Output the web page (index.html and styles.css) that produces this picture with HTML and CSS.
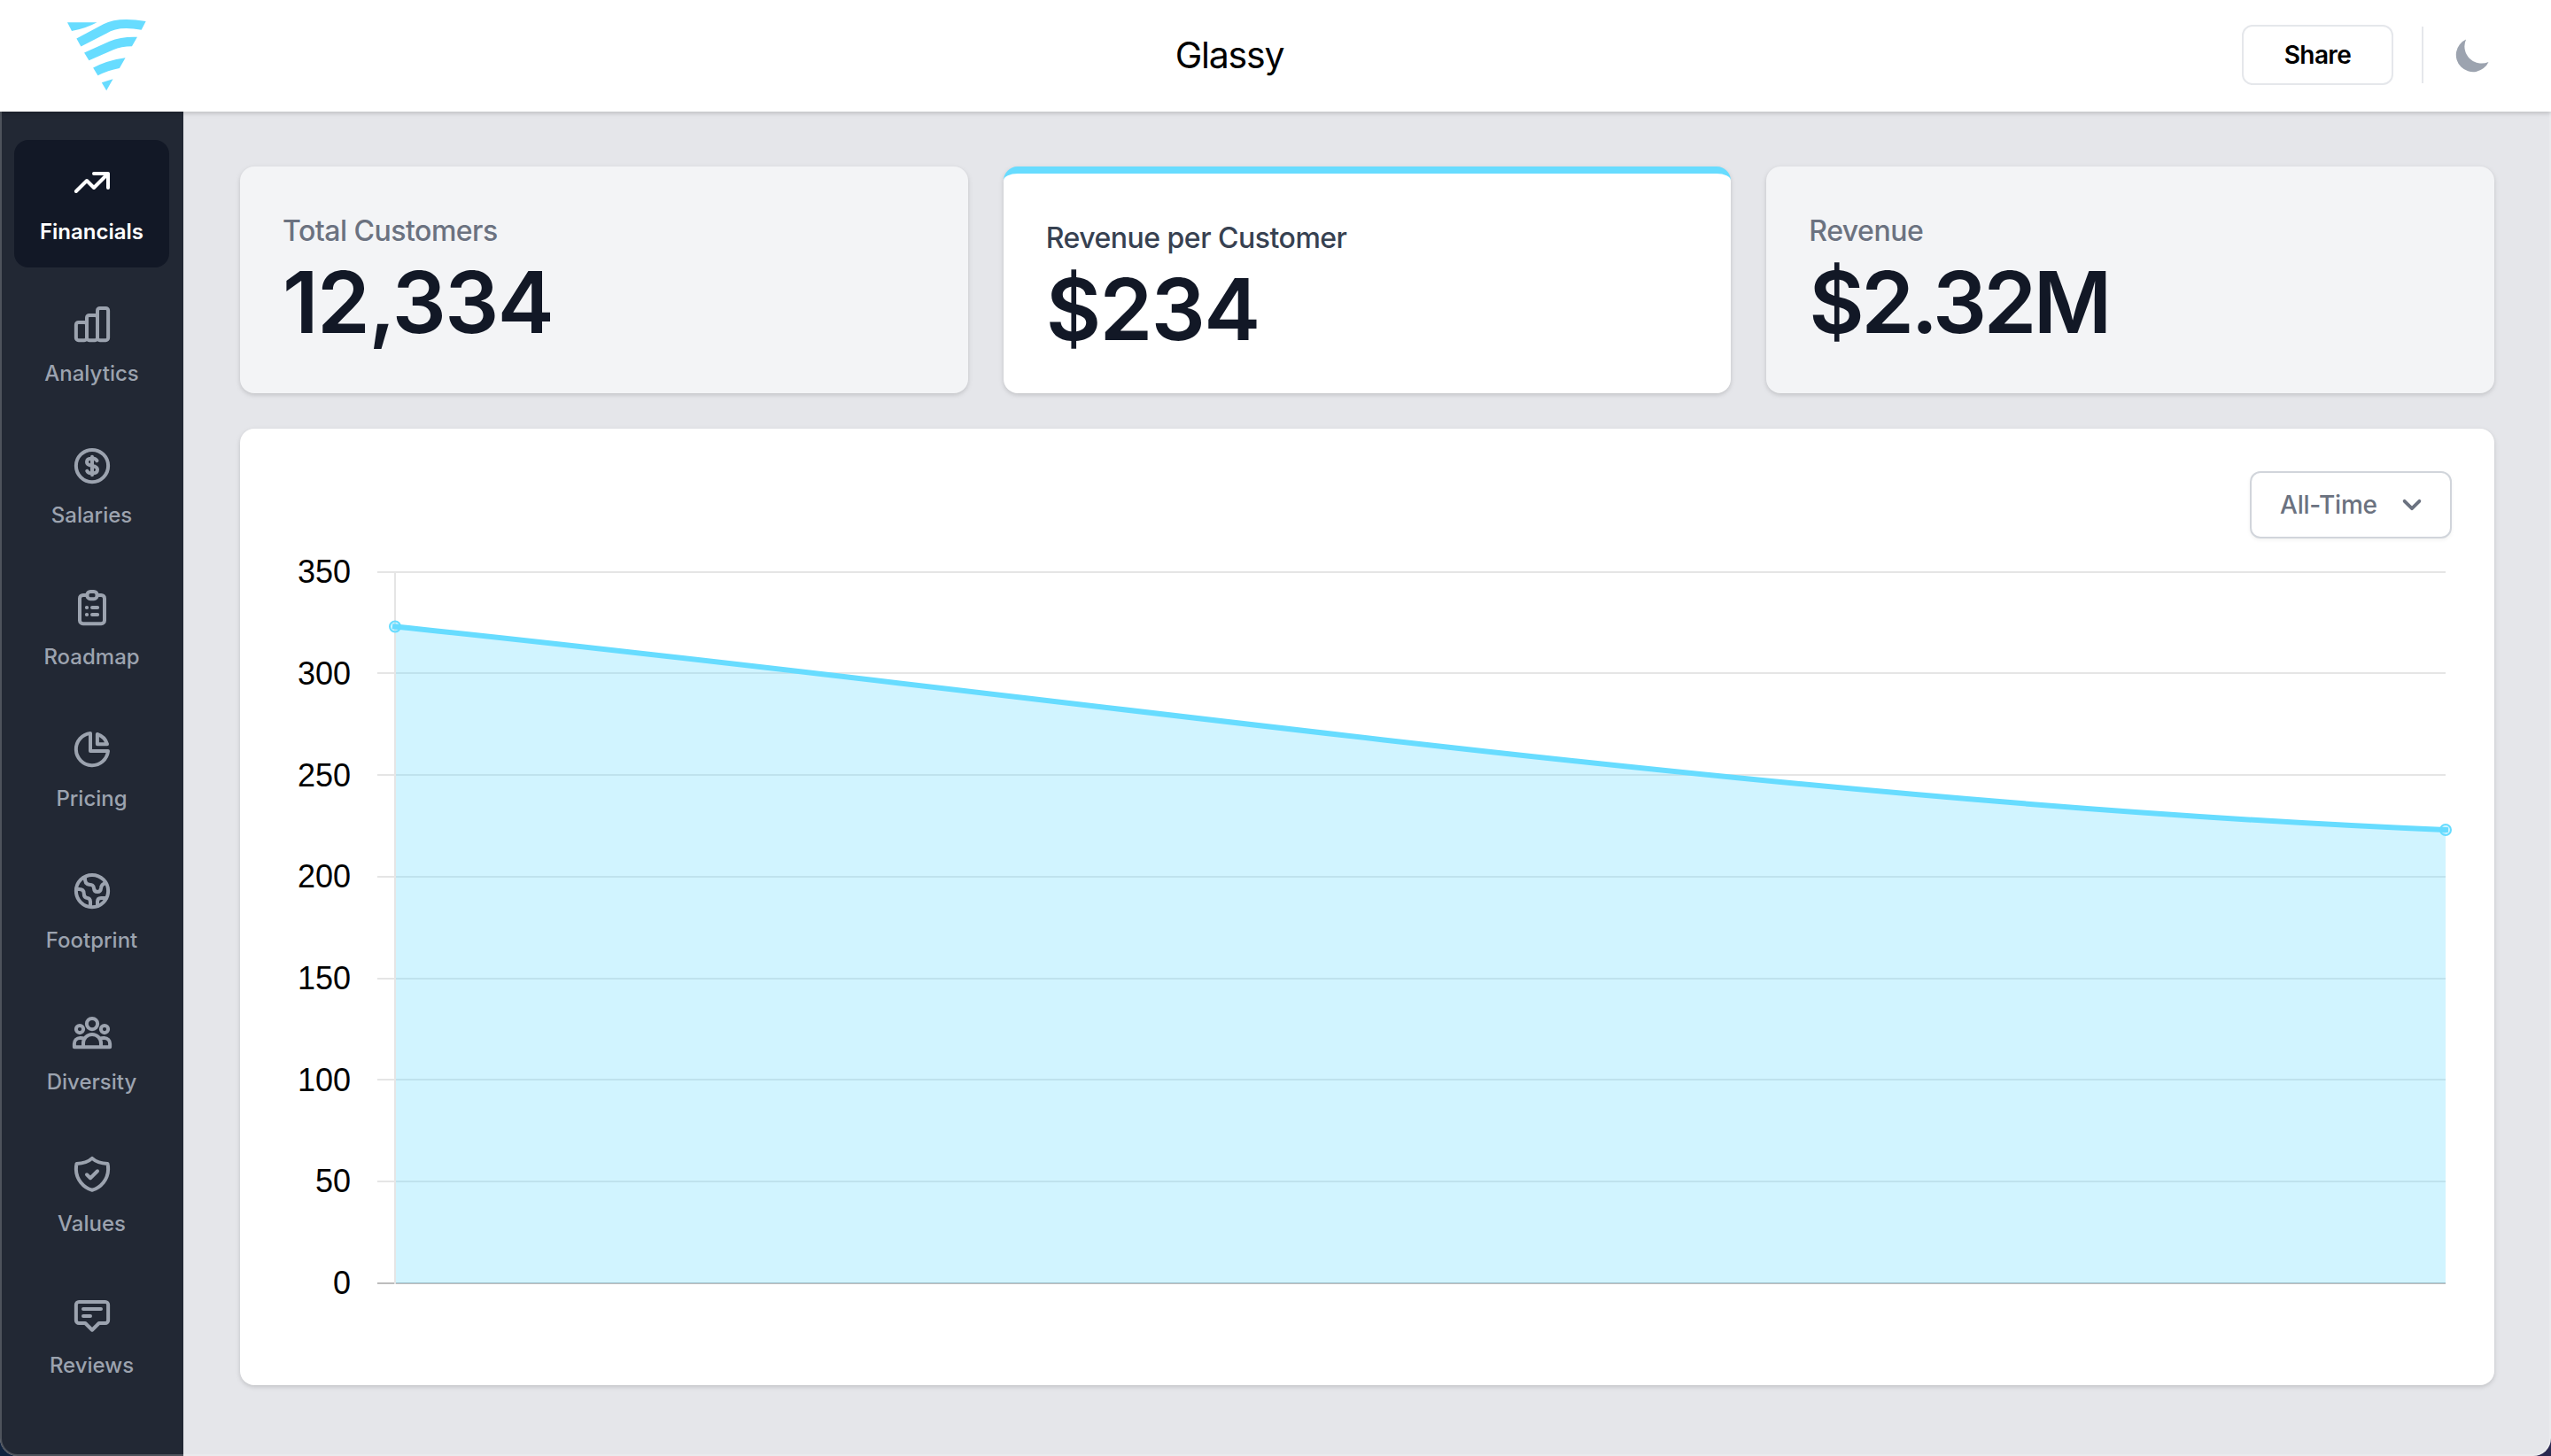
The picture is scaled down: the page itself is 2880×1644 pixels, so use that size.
FILE: index.html
```html
<!DOCTYPE html>
<html lang="en">
<head>
  <meta charset="utf-8">
  <title>Glassy</title>
  <link rel="stylesheet" href="styles.css">
</head>
<body>
  <div class="window">
    <header class="header">
      <a class="logo" href="#">
        <svg viewBox="228 60 266 248">
          <path d="M228 76H328Q290 97 243 105Z"/>
          <path d="M259 130L350 82Q398 56 493 72L478 101Q400 86 360 113L274 157Z"/>
          <path d="M285 178L370 140Q410 123 464 125L446 156Q410 156 383 168L301 204Z"/>
          <path d="M315 229Q360 204 424 195L404 230Q365 237 331 255Z"/>
          <path d="M344 279Q362 273 382 267L360 306Z"/>
        </svg>
      </a>
      <h1 class="title">Glassy</h1>
      <div class="actions">
        <button class="btn-share">Share</button>
        <span class="divider"></span>
        <svg class="moon" viewBox="0 0 20 20"><path d="M17.293 13.293A8 8 0 016.707 2.707a8.001 8.001 0 1010.586 10.586z"/></svg>
      </div>
    </header>

    <div class="content">
      <nav class="sidebar">
        <a class="nav-item active" href="#">
          <svg class="icon" viewBox="0 0 24 24"><path d="M4.75 16L9.6 11.2L12.8 14.4L19.2 8M12.8 8H19.2V14.4"/></svg>
          <span>Financials</span>
        </a>
        <a class="nav-item" href="#">
          <svg class="icon" viewBox="0 0 24 24">
            <rect x="4.75" y="11.15" width="4.85" height="8.1" rx="1.1"/>
            <rect x="9.6" y="7.95" width="4.8" height="11.3" rx="1.1"/>
            <rect x="14.4" y="4.75" width="4.85" height="14.5" rx="1.1"/>
          </svg>
          <span>Analytics</span>
        </a>
        <a class="nav-item" href="#">
          <svg class="icon" viewBox="0 0 24 24">
            <circle cx="12" cy="12" r="7.25"/>
            <path d="M14.2 9.7C13.8 8.9 13 8.6 12 8.6C10.4 8.6 9.6 9.3 9.6 10.3C9.6 11.5 10.8 11.8 12 12C13.3 12.2 14.4 12.6 14.4 13.7C14.4 14.8 13.4 15.4 12 15.4C10.9 15.4 10 15 9.7 14.3M12 7.9V16.1"/>
          </svg>
          <span>Salaries</span>
        </a>
        <a class="nav-item" href="#">
          <svg class="icon" viewBox="0 0 24 24">
            <path d="M9.5 6.35H7.9A1.5 1.5 0 0 0 6.4 7.85V17.75A1.5 1.5 0 0 0 7.9 19.25H16.1A1.5 1.5 0 0 0 17.6 17.75V7.85A1.5 1.5 0 0 0 16.1 6.35H14.5"/>
            <rect x="9.8" y="4.75" width="4.4" height="3.3" rx="1.4"/>
            <path d="M9.55 12H9.65M12 12H14.45M9.55 15.2H9.65M12 15.2H14.45"/>
          </svg>
          <span>Roadmap</span>
        </a>
        <a class="nav-item" href="#">
          <svg class="icon" viewBox="0 0 24 24">
            <path d="M11.2 4.8A7.25 7.25 0 1 0 19.2 12.8H11.2Z"/>
            <path d="M14.35 5.2V9.65H18.8C18.1 7.5 16.5 5.9 14.35 5.2Z"/>
          </svg>
          <span>Pricing</span>
        </a>
        <a class="nav-item" href="#">
          <svg class="icon" viewBox="0 0 24 24">
            <circle cx="12" cy="12" r="7.25"/>
            <path d="M8.8 5.8C8.6 8 9.3 8.9 10.6 9.1C12 9.3 12.7 9.4 12.8 10.8C12.9 12 13.6 12.4 14.4 12.4C15.4 12.4 15.9 11.8 16 10.8C16.1 9.4 17 8.7 18.1 8.4"/>
            <path d="M4.8 11.2H6.2C7.6 11.2 8.3 12 8.3 13.2C8.3 14.6 8.8 15.1 9.8 15.2C10.8 15.3 11.2 16 11.2 17V19"/>
            <path d="M14.4 18.9V16.8C14.4 15.8 15 15.2 16 15.2H18.3"/>
          </svg>
          <span>Footprint</span>
        </a>
        <a class="nav-item" href="#">
          <svg class="icon" viewBox="0 0 24 24">
            <circle cx="12" cy="8" r="2.45"/>
            <circle cx="6.4" cy="10.4" r="1.65"/>
            <circle cx="17.6" cy="10.4" r="1.65"/>
            <path d="M8 18.4V16.75A4 4 0 0 1 16 16.75V18.4"/>
            <path d="M8.4 14.7C7.9 14.4 7.2 14.35 6.6 14.35C5 14.35 3.95 15.5 3.95 17V18.45H20.05V17C20.05 15.5 19 14.35 17.4 14.35C16.8 14.35 16.1 14.4 15.6 14.7"/>
          </svg>
          <span>Diversity</span>
        </a>
        <a class="nav-item" href="#">
          <svg class="icon" viewBox="0 0 24 24">
            <path d="M12 4.75C10.2 6.4 8 7.1 5 7.2C4.8 8 4.75 8.9 4.75 9.8C4.85 14.2 8 18 12 19.1C16 18 19.15 14.2 19.25 9.8C19.25 8.9 19.2 8 19 7.2C16 7.1 13.8 6.4 12 4.75Z"/>
            <path d="M9.6 12.1L11.2 13.7L14.4 10.5"/>
          </svg>
          <span>Values</span>
        </a>
        <a class="nav-item" href="#">
          <svg class="icon" viewBox="0 0 24 24">
            <path d="M4.75 6.9A1.3 1.3 0 0 1 6.05 5.6H17.95A1.3 1.3 0 0 1 19.25 6.9V13.9A1.3 1.3 0 0 1 17.95 15.2H15.1L12 18.3L8.9 15.2H6.05A1.3 1.3 0 0 1 4.75 13.9Z"/>
            <path d="M8 8.8H16M8 12H11.2"/>
          </svg>
          <span>Reviews</span>
        </a>
      </nav>

      <main class="main">
        <div class="cards">
          <div class="card">
            <div class="card-label">Total Customers</div>
            <div class="card-value">12,334</div>
          </div>
          <div class="card selected">
            <div class="card-label">Revenue per Customer</div>
            <div class="card-value">$234</div>
          </div>
          <div class="card">
            <div class="card-label">Revenue</div>
            <div class="card-value tight">$2.32M</div>
          </div>
        </div>

        <div class="panel">
          <button class="dropdown">
            All-Time
            <svg class="chevron" viewBox="0 0 20 20"><path d="M6 8L10 12L14 8"/></svg>
          </button>
          <svg class="chart" viewBox="319 620 2449 896">
            <path class="grid" d="M426 646H2761M426 760H2761M426 875H2761M426 990H2761M426 1105H2761M426 1219H2761M426 1334H2761"/>
            <path class="zero" d="M426 1449H2761"/>
            <path class="area" d="M446 707.5C1218 787 1989 905 2761 937V1449H446Z"/>
            <path class="grid" d="M446 646V1450"/>
            <path class="line" d="M446 707.5C1218 787 1989 905 2761 937"/>
            <circle class="point" cx="446" cy="707.5" r="6"/>
            <circle class="point" cx="2761" cy="937" r="6"/>
            <g class="ticks">
              <text x="396" y="658">350</text>
              <text x="396" y="773">300</text>
              <text x="396" y="888">250</text>
              <text x="396" y="1002">200</text>
              <text x="396" y="1117">150</text>
              <text x="396" y="1232">100</text>
              <text x="396" y="1346">50</text>
              <text x="396" y="1461">0</text>
            </g>
          </svg>
        </div>
      </main>
    </div>
  </div>
</body>
</html>
```
FILE: styles.css
```css
* {
  box-sizing: border-box;
}

body {
  margin: 0;
  background: linear-gradient(to right, #10233f, #2a2850);
  font-family: Inter, "Liberation Sans", sans-serif;
}

.window {
  position: relative;
  display: flex;
  flex-direction: column;
  height: 1644px;
  overflow: hidden;
  background-color: #e5e6ea;
  border-radius: 0 0 20px 20px;
}

/* thin light edge of the window */
.window::after {
  content: "";
  position: absolute;
  inset: 0;
  border: 2px solid rgba(255, 255, 255, 0.2);
  border-radius: 0 0 20px 20px;
  pointer-events: none;
}

.header {
  display: flex;
  align-items: center;
  justify-content: space-between;
  height: 126px;
  padding-right: 64px;
  background-color: #fff;
  box-shadow: 0 2px 6px rgba(0, 0, 0, 0.1), 0 2px 4px rgba(0, 0, 0, 0.08);
  z-index: 1;
}

.logo {
  width: 245px;
  height: 126px;
  padding: 20px 0 0 76px;
}

.logo svg {
  width: 89px;
  height: 83px;
  fill: #67dcff;
}

.title {
  margin: -3px 0 0;
  font-size: 41px;
  font-weight: 400;
  line-height: 48px;
  letter-spacing: -1.2px;
}

.actions {
  display: flex;
  align-items: center;
  gap: 32px;
  margin-top: -2px;
}

.btn-share {
  width: 171px;
  height: 68px;
  padding: 0;
  background-color: #fff;
  border: 2px solid #e5e7eb;
  border-radius: 12px;
  font-family: inherit;
  font-size: 28px;
  font-weight: 600;
  letter-spacing: -0.6px;
  color: #000;
}

.divider {
  width: 2px;
  height: 64px;
  background-color: #e5e7eb;
}

.moon {
  width: 48px;
  height: 48px;
  fill: #9ca3af;
}

.content {
  display: flex;
  flex: 1;
}

.sidebar {
  display: flex;
  flex-direction: column;
  gap: 16px;
  width: 207px;
  padding: 32px 16px;
  background-color: #222834;
}

.nav-item {
  display: flex;
  flex-direction: column;
  align-items: center;
  height: 144px;
  padding-top: 18px;
  border-radius: 16px;
  color: #9ca3af;
  font-size: 24px;
  font-weight: 500;
  line-height: 32px;
  letter-spacing: 0;
  text-decoration: none;
}

.nav-item.active {
  background-color: #121826;
  color: #fff;
  font-weight: 600;
  letter-spacing: 0;
}

.icon {
  width: 60px;
  height: 60px;
  margin-bottom: 10px;
  fill: none;
  stroke: currentColor;
  stroke-width: 1.6;
  stroke-linecap: round;
  stroke-linejoin: round;
}

.main {
  flex: 1;
  padding: 62px 64px 80px;
}

.cards {
  display: grid;
  grid-template-columns: repeat(3, 1fr);
  gap: 40px;
  margin-bottom: 40px;
}

.card,
.panel {
  border-radius: 16px;
  box-shadow: 0 2px 6px rgba(0, 0, 0, 0.1), 0 2px 4px rgba(0, 0, 0, 0.06);
}

.card {
  height: 256px;
  padding: 49px 48px;
  background-color: #f3f4f6;
}

.card.selected {
  background-color: #fff;
  border-top: 8px solid #67dcff;
}

.card-label {
  color: #6b7280;
  font-size: 32px;
  font-weight: 500;
  line-height: 48px;
  letter-spacing: -0.5px;
}

.card.selected .card-label {
  color: #374151;
}

.card-value {
  margin-top: 8px;
  color: #121826;
  font-size: 96px;
  font-weight: 600;
  line-height: 96px;
  letter-spacing: -1.6px;
}

.card-value.tight {
  letter-spacing: -3.6px;
}

.panel {
  display: flex;
  flex-direction: column;
  align-items: flex-end;
  height: 1080px;
  padding: 48px;
  background-color: #fff;
}

.dropdown {
  display: flex;
  align-items: center;
  justify-content: space-between;
  width: 228px;
  height: 76px;
  padding: 0 22px 0 32px;
  background-color: #fff;
  border: 2px solid #d1d5db;
  border-radius: 12px;
  box-shadow: 0 2px 4px rgba(0, 0, 0, 0.05);
  color: #6b7280;
  font-family: inherit;
  font-size: 28px;
  font-weight: 500;
  letter-spacing: -0.2px;
}

.chevron {
  width: 42px;
  height: 42px;
  fill: none;
  stroke: #6b7280;
  stroke-width: 1.8;
  stroke-linecap: round;
  stroke-linejoin: round;
}

.chart {
  width: 100%;
  height: 896px;
  margin-top: 12px;
}

.grid {
  fill: none;
  stroke: #e5e5e5;
  stroke-width: 2;
}

.zero {
  stroke: #bdbdbd;
  stroke-width: 2;
}

.area {
  fill: rgba(103, 220, 255, 0.3);
}

.line {
  fill: none;
  stroke: #67dcff;
  stroke-width: 6;
  stroke-linecap: square;
}

.point {
  fill: rgba(103, 220, 255, 0.3);
  stroke: #67dcff;
  stroke-width: 2;
}

.ticks text {
  font-family: "Liberation Sans", Arial, sans-serif;
  font-size: 36px;
  text-anchor: end;
}
```
